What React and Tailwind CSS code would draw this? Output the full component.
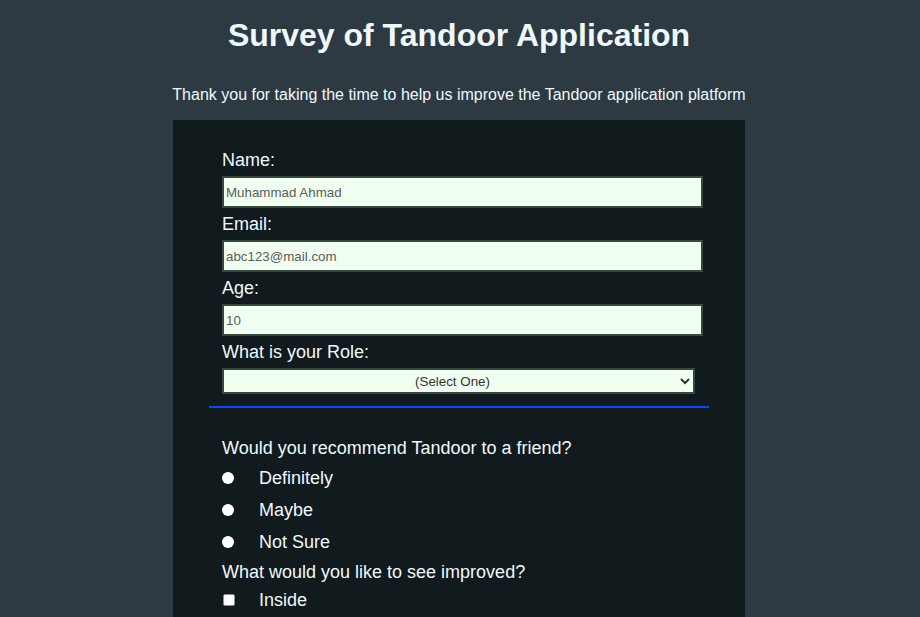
import { useState } from "react";

const fields = [
  { label: "Name:", type: "text", value: "Muhammad Ahmad" },
  { label: "Email:", type: "email", value: "abc123@mail.com" },
  { label: "Age:", type: "number", value: "10" },
];

const recommend = ["Definitely", "Maybe", "Not Sure"];

function App() {
  const [choice, setChoice] = useState("");

  return (
    <div className="min-h-[617px] bg-[#2d3a41] pr-[2px] font-['Liberation_Sans',Arial,sans-serif] text-[#f0f8ff]">
      <h1 className="pt-[17px] text-center text-[32px] font-bold leading-[37px]">
        Survey of Tandoor Application
      </h1>
      <p className="mt-[32px] text-center text-[16px] leading-[18px]">
        Thank you for taking the time to help us improve the Tandoor application platform
      </p>

      <form className="mx-auto mt-[16px] w-[572px] bg-[#111a1c] pb-10 pt-[29px]">
        <div className="pl-[49px]">
          {fields.map((f) => (
            <div key={f.label}>
              <label className="block text-[18px] leading-[22px]">{f.label}</label>
              <input
                type={f.type}
                defaultValue={f.value}
                className="mb-[5px] mt-[5px] block h-[32px] w-[481px] border-2 border-[#3a4640] bg-[#f0fff0] px-[2px] text-[13.33px] text-[#5c5c5c] outline-none"
              />
            </div>
          ))}

          <label className="block text-[18px] leading-[22px]">What is your Role:</label>
          <select
            defaultValue=""
            className="mt-[5px] block h-[26px] w-[473px] border-2 border-[#3a4640] bg-[#f0fff0] text-[13.33px] text-[#333] [text-align-last:center]"
          >
            <option value="">(Select One)</option>
            <option>Student</option>
            <option>Full Time Job</option>
            <option>Other</option>
          </select>
        </div>

        <hr className="mx-[36px] mt-[12px] h-[2px] border-0 bg-[#0a47ff]" />

        <div className="pl-[49px]">
          <p className="mt-[29px] text-[18px] leading-[22px]">Would you recommend Tandoor to a friend?</p>
          <div className="mt-[3px]">
            {recommend.map((r) => (
              <label key={r} className="flex h-[32px] items-center gap-[25px] text-[18px]">
                <input
                  type="radio"
                  name="recommend"
                  checked={choice === r}
                  onChange={() => setChoice(r)}
                  className="h-[12px] w-[12px] appearance-none rounded-full bg-white checked:border-[3px] checked:border-white checked:bg-[#0a47ff]"
                />
                {r}
              </label>
            ))}
          </div>

          <p className="mt-[3px] text-[18px] leading-[22px]">What would you like to see improved?</p>
          <label className="mt-[1px] flex h-[32px] items-center gap-[24px] pl-[1px] text-[18px]">
            <input
              type="checkbox"
              className="h-[12px] w-[12px] appearance-none rounded-[2px] border border-[#8c8c8c] bg-white checked:bg-[#0a47ff]"
            />
            Inside
          </label>
        </div>
      </form>
    </div>
  );
}

export default App;
